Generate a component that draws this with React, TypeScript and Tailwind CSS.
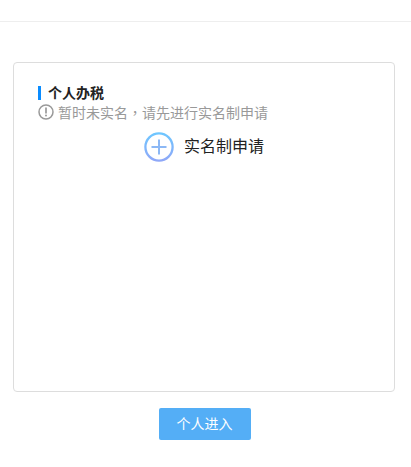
const font = { fontFamily: '"Liberation Sans", "Noto Sans CJK SC", sans-serif' };

const PlusCircle = () => (
  <svg width="30" height="30" viewBox="0 0 30 30" fill="none">
    <defs>
      <linearGradient id="ring" x1="0" y1="0" x2="0" y2="1">
        <stop offset="0" stopColor="#6ec6ff" />
        <stop offset="1" stopColor="#8fa8f8" />
      </linearGradient>
    </defs>
    <circle cx="15" cy="15" r="13.6" stroke="url(#ring)" strokeWidth="2.3" />
    <path d="M15 7.5v15M7.5 15h15" stroke="#8cb8f5" strokeWidth="2" />
  </svg>
);

const WarnIcon = () => (
  <svg width="16" height="16" viewBox="0 0 16 16" fill="none">
    <circle cx="8" cy="8" r="7" stroke="#999" strokeWidth="1.5" />
    <path d="M8 3.5v6" stroke="#999" strokeWidth="1.7" />
    <circle cx="8" cy="11.6" r="1" fill="#999" />
  </svg>
);

export default function App() {
  return (
    <div className="w-[411px] h-[467px] bg-white overflow-hidden" style={font}>
      <div className="h-[22px] border-b border-[#eeeeee]" />
      <div className="mt-[40px] mx-[13px] w-[382px] h-[330px] border border-[#dddddd] rounded-[4px] pt-[22px] pl-[24px]">
        <div className="flex items-center h-[16px]">
          <div className="w-[3px] h-[14px] bg-[#0a8cff]" />
          <span className="ml-[7px] text-[14px] font-bold text-[#222222] leading-[16px]">个人办税</span>
        </div>
        <div className="flex items-center h-[18px] mt-[2px] text-[14px] leading-[18px] text-[#999999]">
          <WarnIcon />
          <span className="ml-[4px]">
            暂时未实名<span className="font-['Noto_Sans_CJK_TC']">，</span>请先进行实名制申请
          </span>
        </div>
        <div className="flex items-center mt-[11px] ml-[106px]">
          <PlusCircle />
          <span className="ml-[10px] text-[16px] text-[#222222]">实名制申请</span>
        </div>
      </div>
      <div className="flex justify-center mt-[16px] pr-[2px]">
        <button className="w-[92px] h-[32px] rounded-[2px] bg-[#54aef6] text-white text-[14px]">个人进入</button>
      </div>
    </div>
  );
}
